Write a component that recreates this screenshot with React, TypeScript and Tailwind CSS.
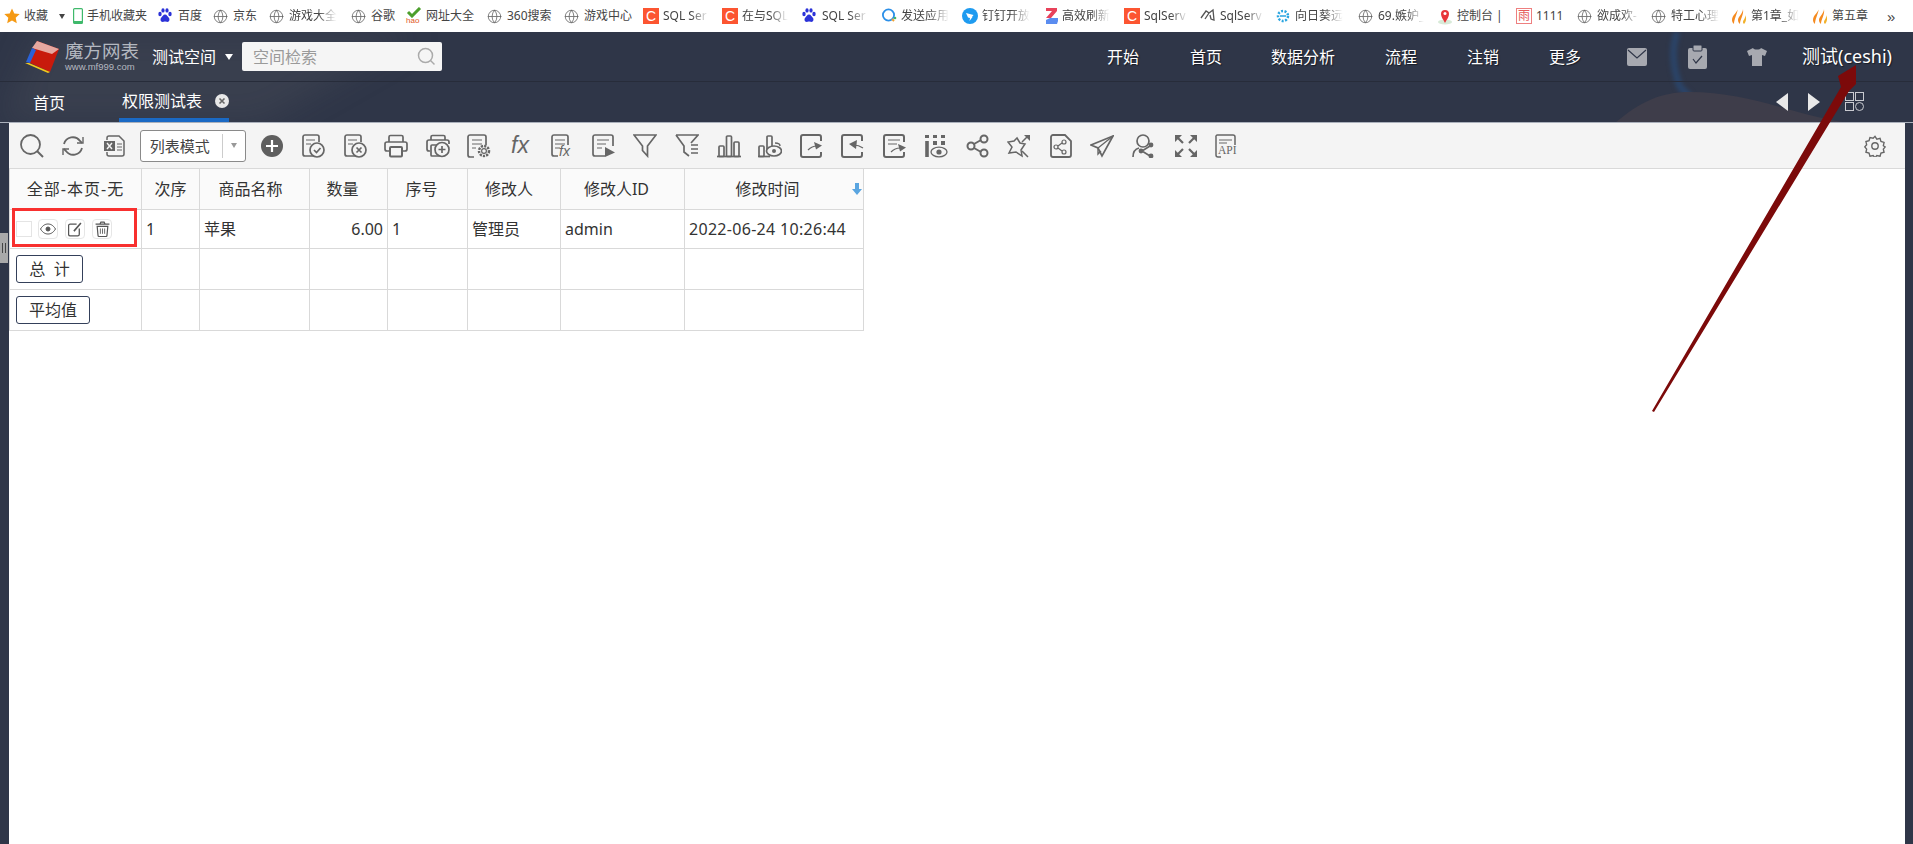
import type { ReactNode } from "react";
import { Globe } from "lucide-react";

const font = "font-['Noto_Sans','Noto_Sans_CJK_SC',sans-serif]";

/* ---------- bookmark icons ---------- */

const Star = () => (
  <svg width="16" height="16" viewBox="0 0 16 16" aria-hidden>
    <path d="M8 0.5l2.3 5 5.4.6-4 3.7 1.1 5.4L8 12.5l-4.8 2.7 1.1-5.4-4-3.7 5.4-.6z" fill="#f59a14" />
  </svg>
);

const Phone = () => (
  <svg width="10" height="16" viewBox="0 0 10 16" fill="none" aria-hidden>
    <rect x="0.6" y="0.6" width="8.8" height="14.8" rx="1" stroke="#3fb96b" strokeWidth="1.2" />
    <rect x="0.6" y="13" width="8.8" height="2.4" fill="#3fb96b" />
  </svg>
);

const Paw = () => (
  <svg width="14" height="16" viewBox="0 0 14 16" fill="#2b32d8" aria-hidden>
    <ellipse cx="2" cy="6" rx="1.7" ry="2.2" />
    <ellipse cx="5" cy="2.4" rx="1.6" ry="2.2" />
    <ellipse cx="9" cy="2.4" rx="1.6" ry="2.2" />
    <ellipse cx="12" cy="6" rx="1.7" ry="2.2" />
    <path d="M7 6.5c2 0 2.4 2 3.6 3 1.5 1.4 1 4.5-1.4 4.5-1 0-1.4-.4-2.2-.4s-1.200.4-2.200.4c-2.400 0-2.900-3.100-1.400-4.500 1.200-1 1.600-3 3.600-3z" />
  </svg>
);

const Hao = () => (
  <div className="relative h-[18px] w-4">
    <svg width="16" height="11" viewBox="0 0 16 11" fill="none" aria-hidden>
      <path d="M2 5l4 4 8-8" stroke="#4c9f2c" strokeWidth="3" />
    </svg>
    <span className="absolute bottom-0 left-0 font-['Liberation_Sans',sans-serif] text-[8px] leading-[8px] text-[#e2571e]">
      hao
    </span>
  </div>
);

const CsdnC = () => (
  <div className="grid h-4 w-4 place-items-center bg-[#fc5531] font-['Liberation_Sans',sans-serif] text-[14px] leading-none text-white">
    C
  </div>
);

const BlueQ = () => (
  <svg width="16" height="16" viewBox="0 0 16 16" fill="none" aria-hidden>
    <circle cx="7.500" cy="7" r="5.600" stroke="#2b8fe8" strokeWidth="1.800" />
    <path d="M11 11l2 2" stroke="#f0a030" strokeWidth="2" />
    <circle cx="14" cy="10" r="1.300" fill="#44b56a" />
  </svg>
);

const Ding = () => (
  <svg width="16" height="16" viewBox="0 0 16 16" aria-hidden>
    <circle cx="8" cy="8" r="8" fill="#1e9bf0" />
    <path d="M4 5l7.500 2-1.500 2 .5 0-3 4 .5-3-2-.5z" fill="#fff" />
  </svg>
);

const Zed = () => (
  <svg width="13" height="16" viewBox="0 0 13 16" aria-hidden>
    <path d="M1 0h11v3L6 10H1l6-7H1z" fill="#e8425a" />
    <path d="M1 12l4-2h8v3l-1 3H1z" fill="#5a8cf0" />
  </svg>
);

const Eagle = () => (
  <svg width="16" height="16" viewBox="0 0 16 16" fill="none" stroke="#555" strokeWidth="1.300" aria-hidden>
    <path d="M1 10l5-7 3 2-4 6M9 5l4-3 1 10-3-1-1-4" />
  </svg>
);

const Sunflower = () => (
  <svg width="16" height="16" viewBox="0 0 16 16" fill="none" aria-hidden>
    <circle cx="8" cy="8" r="5" stroke="#2aa5e0" strokeWidth="2.500" strokeDasharray="2 1.500" />
    <path d="M5 8h6" stroke="#2aa5e0" strokeWidth="1.500" />
  </svg>
);

const Pin = () => (
  <svg width="16" height="18" viewBox="0 0 16 18" aria-hidden>
    <ellipse cx="8" cy="15" rx="7" ry="2.500" fill="#d8ead8" />
    <path d="M8 16c-2-4-4-6-4-9a4 4 0 018 0c0 3-2 5-4 9z" fill="#e8353a" />
    <circle cx="8" cy="6.500" r="1.500" fill="#fff" />
  </svg>
);

const Rain = () => (
  <div className="grid h-4 w-4 place-items-center border border-[#ee7f7f] text-[12px] leading-none text-[#e65c5c]">雨</div>
);

const Flame = () => (
  <svg width="17" height="16" viewBox="0 0 17 16" aria-hidden>
    <path d="M7 0C7 4 1 7 1 12c0 2 1 3 2 4 0-5 3-9 4-16z" fill="#f58a1f" />
    <path d="M12 1c0 4-5 8-5 11 0 2 1 3 2 4 0-5 4-9 3-15z" fill="#f58a1f" />
    <path d="M14 7c1 3-2 5-2 7 0 1 .5 1.500 1 2 2-2 3-6 1-9z" fill="#f2b12a" />
  </svg>
);

const Earth = () => <Globe size={15} strokeWidth={1.300} className="text-[#666]" />;

const bookmarks: { icon: ReactNode; label: string; w: number; tw: number; iw?: number; fade?: boolean }[] = [
  { icon: <Phone />, label: "手机收藏夹", w: 85, tw: 62, iw: 14 },
  { icon: <Paw />, label: "百度", w: 55, tw: 26 },
  { icon: <Earth />, label: "京东", w: 56, tw: 26 },
  { icon: <Earth />, label: "游戏大全", w: 82, tw: 48, fade: true },
  { icon: <Earth />, label: "谷歌", w: 55, tw: 26 },
  { icon: <Hao />, label: "网址大全", w: 81, tw: 50 },
  { icon: <Earth />, label: "360搜索", w: 77, tw: 48 },
  { icon: <Earth />, label: "游戏中心", w: 79, tw: 50 },
  { icon: <CsdnC />, label: "SQL Ser", w: 79, tw: 46, fade: true },
  { icon: <CsdnC />, label: "在与SQL", w: 80, tw: 46, fade: true },
  { icon: <Paw />, label: "SQL Ser", w: 79, tw: 46, fade: true },
  { icon: <BlueQ />, label: "发送应用", w: 81, tw: 48, fade: true },
  { icon: <Ding />, label: "钉钉开放", w: 83, tw: 48, fade: true },
  { icon: <Zed />, label: "高效刷新", w: 79, tw: 48, iw: 17, fade: true },
  { icon: <CsdnC />, label: "SqlServ", w: 76, tw: 44, fade: true },
  { icon: <Eagle />, label: "SqlServ", w: 75, tw: 44, fade: true },
  { icon: <Sunflower />, label: "向日葵远", w: 83, tw: 48, fade: true },
  { icon: <Earth />, label: "69.嫉妒_", w: 79, tw: 46, fade: true },
  { icon: <Pin />, label: "控制台 |", w: 79, tw: 46 },
  { icon: <Rain />, label: "1111", w: 61, tw: 30 },
  { icon: <Earth />, label: "欲成欢-", w: 74, tw: 42, fade: true },
  { icon: <Earth />, label: "特工心理", w: 80, tw: 48, fade: true },
  { icon: <Flame />, label: "第1章_如", w: 81, tw: 48, fade: true },
  { icon: <Flame />, label: "第五章", w: 75, tw: 48 },
];

function BookmarkBar() {
  return (
    <div className="flex h-8 items-center bg-white pl-1 text-[12px] text-[#444]">
      <div className="flex w-[69px] items-center">
        <Star />
        <span className="ml-1">收藏</span>
        <span className="ml-[11px] h-0 w-0 border-x-[3.500px] border-t-[5px] border-x-transparent border-t-[#444]" />
      </div>
      {bookmarks.map((b, i) => (
        <div key={i} className="flex shrink-0 items-center" style={{ width: b.w }}>
          <div className="flex shrink-0 items-center" style={{ width: b.iw ?? 20 }}>
            {b.icon}
          </div>
          <span
            className={`overflow-hidden whitespace-nowrap ${b.fade ? "[mask-image:linear-gradient(to_right,black_60%,transparent)]" : ""}`}
            style={{ width: b.tw }}
          >
            {b.label}
          </span>
        </div>
      ))}
      <span className="font-['Liberation_Sans',sans-serif] text-[15px] leading-none">»</span>
    </div>
  );
}

/* ---------- header ---------- */

function Logo() {
  return (
    <svg width="36" height="32" viewBox="0 0 36 32" aria-hidden>
      <path d="M13 0L35 8 26 31 4 21z" fill="#c81a0c" />
      <path d="M13 0L35 8 28 13 8 7z" fill="#e6a8a0" />
      <path d="M8 7L2 21l4 1 6-13z" fill="#2a62d8" />
      <path d="M1 22l23 10 2-1L5 22z" fill="#f2c91c" />
    </svg>
  );
}

const navItems = [
  { label: "开始", ml: "ml-0" },
  { label: "首页", ml: "ml-[51px]" },
  { label: "数据分析", ml: "ml-[49px]" },
  { label: "流程", ml: "ml-[50px]" },
  { label: "注销", ml: "ml-[50px]" },
  { label: "更多", ml: "ml-[50px]" },
];

function Header() {
  return (
    <div className="relative h-[91px] overflow-hidden bg-[#2f3648]">
      {/* backdrop photo, roughly */}
      <svg className="absolute inset-0" width="1913" height="91" viewBox="0 0 1913 91" aria-hidden>
        <path className="blur-lg" d="M40 0H420L260 91H0z" fill="#6d6f70" fillOpacity="0.16" />
        <path className="blur-[2px]" d="M1677 0C1672 15 1672 35 1680 55L1690 65" fill="none" stroke="#2b4468" strokeWidth="7" />
        <path d="M1615 91C1640 70 1660 60 1690 60 1750 60 1800 85 1850 91z" fill="#3e3d4a" />
      </svg>

      <div className="relative flex h-[50px] items-center border-b border-[#272c3a]">
        <div className="ml-6 w-[41px] shrink-0">
          <Logo />
        </div>
        <div className="w-[87px] shrink-0 text-[#b4b8c0]">
          <div className="text-[18.500px] leading-[20px]">魔方网表</div>
          <div className="font-['Liberation_Sans',sans-serif] text-[9.500px] leading-[11px]">www.mf999.com</div>
        </div>
        <span className="text-[16px] text-white">测试空间</span>
        <span className="ml-[9px] h-0 w-0 border-x-[4px] border-t-[6px] border-x-transparent border-t-white" />
        <div className="ml-[9px] flex h-[29px] w-[200px] items-center justify-between rounded-[2px] bg-[#f5f5f5] pr-[6px] pl-[11px]">
          <span className="text-[16px] text-[#9a9a9a]">空间检索</span>
          <svg width="19" height="19" viewBox="0 0 19 19" fill="none" stroke="#aaa" strokeWidth="1.500" aria-hidden>
            <circle cx="8.500" cy="8.500" r="7" />
            <path d="M13.500 13.500l4 4" />
          </svg>
        </div>

        <div className="ml-auto flex items-center pr-[21px] text-[16px] text-white [text-shadow:1px_1px_1px_rgba(0,0,0,0.5)]">
          {navItems.map((n) => (
            <span key={n.label} className={n.ml}>
              {n.label}
            </span>
          ))}
          <svg className="ml-[46px]" width="20" height="20" viewBox="0 0 20 20" aria-hidden>
            <rect y="1" width="20" height="18" rx="2" fill="#a7a9b0" />
            <path d="M1 3l9 8 9-8" fill="none" stroke="#2f3648" strokeWidth="1.200" />
          </svg>
          <svg className="ml-[41px]" width="19" height="24" viewBox="0 0 19 24" aria-hidden>
            <rect y="3" width="19" height="21" rx="2" fill="#a7a9b0" />
            <rect x="5" y="0" width="9" height="6" rx="1" fill="#a7a9b0" stroke="#2f3648" />
            <path d="M5 14l3 4 6-7" fill="none" stroke="#2f3648" strokeWidth="1.200" />
          </svg>
          <svg className="ml-[40px]" width="20" height="20" viewBox="0 0 20 20" aria-hidden>
            <path d="M6 1c1 2 7 2 8 0l6 3-2 5-3-1v11H5V8L2 9 0 4z" fill="#a7a9b0" />
          </svg>
          <span className="ml-[35px] text-[18px]">测试(ceshi)</span>
        </div>
      </div>

      <div className="relative flex h-[41px] items-center">
        <span className="ml-[33px] text-[16px] text-white">首页</span>
        <div className="relative ml-[54px] flex h-[39px] w-[110px] items-center border-b-4 border-[#1a69c4] pl-[3px]">
          <span className="text-[16px] text-white">权限测试表</span>
          <svg className="ml-[13px]" width="14" height="14" viewBox="0 0 14 14" aria-hidden>
            <circle cx="7" cy="7" r="7" fill="#e8e8e8" />
            <path d="M4.500 4.500l5 5M9.500 4.500l-5 5" stroke="#666" strokeWidth="1.600" />
          </svg>
        </div>
        <div className="ml-auto flex -translate-y-px items-center pr-[49px]">
          <span className="h-0 w-0 border-y-[9px] border-r-[12px] border-y-transparent border-r-[#e8e8e8]" />
          <span className="ml-[20px] h-0 w-0 border-y-[9px] border-l-[12px] border-y-transparent border-l-[#e8e8e8]" />
          <svg className="ml-[25px]" width="19" height="19" viewBox="0 0 19 19" fill="none" stroke="#c8cad0" strokeWidth="1" aria-hidden>
            <rect x="0.500" y="0.500" width="8" height="8" />
            <rect x="10.500" y="0.500" width="8" height="8" />
            <rect x="0.500" y="10.500" width="8" height="8" />
            <circle cx="14.500" cy="14.500" r="4" />
          </svg>
        </div>
      </div>
      <div className="absolute right-0 bottom-0 left-0 h-px bg-[#aab0bb]" />
    </div>
  );
}

/* ---------- toolbar ---------- */

const G = ({ children }: { children: ReactNode }) => (
  <svg width="24" height="24" viewBox="0 0 24 24" fill="none" stroke="#666" strokeWidth="1.700" aria-hidden>
    {children}
  </svg>
);

const docBody = "M16 22H4a2 2 0 01-2-2V3a2 2 0 012-2h12a2 2 0 012 2v5";

const tools: ReactNode[] = [
  // add
  <svg key="add" width="24" height="24" viewBox="0 0 24 24" aria-hidden>
    <circle cx="12" cy="12" r="11" fill="#5f5f5f" />
    <path d="M12 6v12M6 12h12" stroke="#fff" strokeWidth="2.200" />
  </svg>,
  // doc check
  <G key="c">
    <path d={docBody} />
    <path d="M5 6h9M5 10h5" strokeWidth="1.200" />
    <circle cx="16" cy="16" r="7" fill="#f4f4f4" />
    <path d="M13 16l2.500 2.500 4-4.500" />
  </G>,
  // doc cross
  <G key="x">
    <path d={docBody} />
    <path d="M5 6h9M5 10h5" strokeWidth="1.200" />
    <circle cx="16" cy="16" r="7" fill="#f4f4f4" />
    <path d="M13.500 13.500l5 5M18.500 13.500l-5 5" />
  </G>,
  // print
  <G key="p">
    <path d="M5 8V3a1.500 1.500 0 011.500-1.500h11A1.500 1.500 0 0119 3v5" />
    <path d="M5 17H3a2 2 0 01-2-2v-5a2 2 0 012-2h18a2 2 0 012 2v5a2 2 0 01-2 2h-2" />
    <rect x="6" y="13" width="12" height="9.500" rx="1" strokeWidth="2" />
  </G>,
  // print add
  <G key="pa">
    <path d="M5 6V3a1.500 1.500 0 011.500-1.500h11A1.500 1.500 0 0119 3v3" />
    <path d="M4 17H3a2 2 0 01-2-2V8a2 2 0 012-2h18a2 2 0 012 2v2" />
    <rect x="5" y="11" width="8" height="11" rx="1" />
    <circle cx="16" cy="15.500" r="7" fill="#f4f4f4" />
    <path d="M16 12v7M12.500 15.500h7" />
  </G>,
  // doc gear
  <G key="g">
    <path d="M7 23H3a2 2 0 01-2-2V3a2 2 0 012-2h14a2 2 0 012 2v8" />
    <path d="M5 6h10M5 10h10M5 14h4" strokeWidth="1.200" />
    <circle cx="17" cy="17" r="5" strokeWidth="2.500" strokeDasharray="2.200 1.100" />
    <circle cx="17" cy="17" r="2.400" strokeWidth="1.200" />
  </G>,
  // fx
  <svg key="fx" className="overflow-visible" width="24" height="24" viewBox="0 0 24 24" aria-hidden>
    <text x="2" y="19" fill="#666" fontSize="23" fontStyle="italic" fontFamily="Liberation Sans, sans-serif">
      fx
    </text>
  </svg>,
  // doc fx
  <svg key="dfx" className="overflow-visible" width="24" height="24" viewBox="0 0 24 24" fill="none" stroke="#666" strokeWidth="1.700" aria-hidden>
    <path d="M8 22H4a2 2 0 01-2-2V3a2 2 0 012-2h12a2 2 0 012 2v8" />
    <path d="M5 6h10M5 10h10M5 14h5" strokeWidth="1.200" />
    <text x="9" y="22" fill="#666" stroke="none" fontSize="14" fontStyle="italic" fontFamily="Liberation Sans, sans-serif">
      fx
    </text>
  </svg>,
  // doc play
  <G key="dp">
    <path d="M13 22H3a2 2 0 01-2-2V3a2 2 0 012-2h16a2 2 0 012 2v9" />
    <path d="M5 6h12M5 10h9M5 14h5" strokeWidth="1.200" />
    <path d="M13 13l10 5.500-10 4.500z" fill="#666" stroke="none" />
  </G>,
  // filter
  <G key="f">
    <path d="M1 1h22l-8.500 11v10l-5-5.500V12z" />
  </G>,
  // filter list
  <G key="fl">
    <path d="M1 1h22l-7 8M1 1l8 11v6l5 4" />
    <path d="M16 11h7M16 15h7M16 19h7" strokeWidth="1.400" />
  </G>,
  // bars
  <G key="b">
    <path d="M0 22.500h24" />
    <rect x="2" y="12" width="5" height="10.500" rx="1" />
    <rect x="9.500" y="2" width="5" height="20.500" rx="1" />
    <rect x="17" y="8" width="5" height="14.500" rx="1" />
  </G>,
  // bars eye
  <G key="be">
    <path d="M0 22.500h12" />
    <rect x="1" y="12" width="5" height="10.500" rx="1" />
    <rect x="9" y="2" width="5" height="14" rx="1" />
    <ellipse cx="16" cy="17" rx="7.500" ry="5" fill="#f4f4f4" />
    <circle cx="16" cy="17" r="2" fill="#666" stroke="none" />
    <path d="M17 9c3 0 5 1 5 3" strokeWidth="1.400" />
  </G>,
  // export
  <G key="ex">
    <path d="M21 7V3a2 2 0 00-2-2H3a2 2 0 00-2 2v18a2 2 0 002 2h16a2 2 0 002-2v-3" strokeWidth="2" />
    <path d="M8 16c3-3 6-4 9-4" strokeWidth="1.200" />
    <path d="M14 8l8 3.500-6 4z" fill="#666" stroke="none" />
  </G>,
  // import
  <G key="im">
    <path d="M1 7V3a2 2 0 012-2h16a2 2 0 012 2v4M21 18v3a2 2 0 01-2 2H3a2 2 0 01-2-2V7" strokeWidth="2" />
    <path d="M22 14c-3-2-6-3-9-3" strokeWidth="1.200" />
    <path d="M8 10l8-4-1 9z" fill="#666" stroke="none" />
  </G>,
  // doc arrow
  <G key="da">
    <path d="M21 8V3a2 2 0 00-2-2H3a2 2 0 00-2 2v18a2 2 0 002 2h16a2 2 0 002-2v-3" strokeWidth="2" />
    <path d="M5 6h12M5 10h9" strokeWidth="1.200" />
    <path d="M8 18c3-3 6-4 9-4" strokeWidth="1.200" />
    <path d="M15 10l8 3.500-6 4z" fill="#666" stroke="none" />
  </G>,
  // columns eye
  <G key="ce">
    <path d="M3 7v16" strokeWidth="3.600" />
    <path d="M1 1h4v3H1zM9 1h4v3H9zM17 1h4v3h-4zM9 7h4v4H9zM17 7h4v4h-4z" fill="#666" stroke="none" />
    <ellipse cx="15" cy="18" rx="8" ry="4.800" strokeWidth="1.300" />
    <circle cx="15" cy="18" r="2.600" fill="#666" stroke="none" />
  </G>,
  // share
  <G key="s">
    <circle cx="18" cy="5" r="3.500" strokeWidth="2" />
    <circle cx="5" cy="12" r="3.500" strokeWidth="2" />
    <circle cx="18" cy="19" r="3.500" strokeWidth="2" />
    <path d="M8 10l7-4M8 14l7 4" strokeWidth="2" />
  </G>,
  // pin arrow
  <G key="pin">
    <path d="M10 4l3 5 5 1-4 6 1 6-6-4-7 1 3-6-4-5 6-1z" strokeWidth="1.500" />
    <path d="M15 17l6 6M15 8l5-5" strokeWidth="1.500" />
    <path d="M17 1h6v6z" fill="#666" stroke="none" />
  </G>,
  // doc share
  <G key="ds">
    <path d="M16 1H4a2 2 0 00-2 2v18a2 2 0 002 2h16a2 2 0 002-2V7z" strokeWidth="1.800" />
    <circle cx="15" cy="8" r="2" strokeWidth="1.200" />
    <circle cx="7" cy="13" r="2" strokeWidth="1.200" />
    <circle cx="15" cy="18" r="2" strokeWidth="1.200" />
    <path d="M9 12l4-3M9 14l4 3" strokeWidth="1.200" />
  </G>,
  // send
  <G key="send">
    <path d="M23 2L1 11l7 3 4 8z" />
    <path d="M23 2L8 14v6l3-3" strokeWidth="1.400" />
  </G>,
  // user share
  <G key="us">
    <circle cx="11" cy="7" r="6" />
    <path d="M1 23c0-5 2-8 6-9" />
    <path d="M10 17l8-5M10 17l8 5" strokeWidth="1.600" />
    <circle cx="19" cy="11" r="2.400" fill="#666" stroke="none" />
    <circle cx="9" cy="17" r="2.400" fill="#666" stroke="none" />
    <circle cx="19" cy="22" r="2.400" fill="#666" stroke="none" />
  </G>,
  // expand
  <G key="e">
    <path d="M3 3l6 6M21 3l-6 6M3 21l6-6M21 21l-6-6" strokeWidth="2.200" />
    <path d="M1 1h7L1 8zM23 1h-7l7 7zM1 23h7l-7-7zM23 23h-7l7-7z" fill="#666" stroke="none" />
  </G>,
  // API doc
  <svg key="api" className="overflow-visible" width="24" height="24" viewBox="0 0 24 24" fill="none" stroke="#666" strokeWidth="1.500" aria-hidden>
    <path d="M20 11V3a2 2 0 00-2-2H2.500A1.500 1.500 0 001 3v18a2 2 0 002 2h3" />
    <path d="M4 6h13M4 9h8" strokeWidth="1" />
    <text x="3" y="20" fill="#666" stroke="none" fontSize="11.500" fontFamily="Liberation Serif, serif">
      API
    </text>
  </svg>,
];

function Toolbar() {
  return (
    <div className="flex h-[46px] shrink-0 items-center border-b border-[#d9d9d9] bg-[#f4f4f4] pl-[2px]">
      <div className="grid w-[41.600px] place-items-center">
        <svg width="24" height="24" viewBox="0 0 24 24" fill="none" stroke="#666" strokeWidth="1.800" aria-hidden>
          <circle cx="10.500" cy="10.500" r="9.500" />
          <path d="M17 17l6 6" strokeWidth="2" />
        </svg>
      </div>
      <div className="grid w-[41.600px] place-items-center">
        <svg width="22" height="22" viewBox="0 0 22 22" fill="none" stroke="#666" strokeWidth="1.800" aria-hidden>
          <path d="M2 9a9 9 0 0116-3l2 2" />
          <path d="M20 13a9 9 0 01-16 3l-2-2" />
          <path d="M21 2v6h-6M1 20v-6h6" strokeWidth="1.400" />
        </svg>
      </div>
      <div className="grid w-[41.600px] place-items-center">
        <svg width="21" height="22" viewBox="0 0 21 22" fill="none" stroke="#666" strokeWidth="1.500" aria-hidden>
          <path d="M3 5V3a2 2 0 012-2h10l5 5v13a2 2 0 01-2 2H5a2 2 0 01-2-2v-2" />
          <rect x="0" y="6" width="11" height="10" fill="#666" stroke="none" />
          <path d="M3 8l5 6M8 8l-5 6" stroke="#f4f4f4" strokeWidth="1.400" />
          <path d="M13 9h5M13 12h5M13 15h5" strokeWidth="1.200" />
        </svg>
      </div>
      <div className="ml-[4px] flex h-8 w-[106px] shrink-0 items-center rounded-[3px] border border-[#8a8a8a] bg-white pl-[9px] text-[15px] text-[#444]">
        <span className="w-[73px] shrink-0 border-r border-[#ccc] leading-[24px]">列表模式</span>
        <span className="ml-[8px] h-0 w-0 border-x-[3.500px] border-t-[5px] border-x-transparent border-t-[#999]" />
      </div>
      <div className="ml-[5px] flex">
        {tools.map((t, i) => (
          <div key={i} className="grid w-[41.550px] place-items-center">
            {t}
          </div>
        ))}
      </div>
      <div className="mr-[19px] ml-auto">
        <svg width="22" height="22" viewBox="0 0 24 24" fill="none" stroke="#666" strokeWidth="1.500" aria-hidden>
          <circle cx="12" cy="12" r="3.500" />
          <path d="M12 1.500l2 3 3.500-.8 1 3.400 3.400 1-.8 3.500 2 1.400-2 2.400.8 3.400-3.400 1-1 3.400-3.500-.8-2 2.500-2-2.500-3.500.8-1-3.400-3.400-1 .8-3.400-2-2.400 2-2.400-.8-3.500 3.400-1 1-3.400 3.500.8z" />
        </svg>
      </div>
    </div>
  );
}

/* ---------- table ---------- */

const cols = [132, 58, 110, 78, 80, 93, 124, 179];
const th = "border-r border-b border-[#d9d9d9] bg-[#fafafa] text-center font-normal";
const td = "border-r border-b border-[#d9d9d9] px-[4px] align-middle";

const ActionBox = ({ children }: { children: ReactNode }) => (
  <div className="grid h-5 w-5 place-items-center rounded-[4px] border border-[#e6e6e6]">{children}</div>
);

function DataTable() {
  return (
    <table className="w-[855px] table-fixed self-start border-separate border-spacing-0 border-l border-[#d9d9d9] text-[16px] text-[#333]">
      <colgroup>
        {cols.map((w, i) => (
          <col key={i} style={{ width: w }} />
        ))}
      </colgroup>
      <tbody>
        <tr className="h-[41px]">
          <th className={`${th} tracking-[1px]`}>全部-本页-无</th>
          <th className={th}>次序</th>
          <th className={`${th} pr-[8px]`}>商品名称</th>
          <th className={`${th} pr-[12px]`}>数量</th>
          <th className={`${th} pr-[12px]`}>序号</th>
          <th className={`${th} pr-[10px]`}>修改人</th>
          <th className={`${th} pr-[12px]`}>修改人ID</th>
          <th className={`${th} relative pr-[13px]`}>
            修改时间
            <svg className="absolute top-[14px] right-[1px]" width="10" height="12" viewBox="0 0 10 12" aria-hidden>
              <path d="M3 0h4v6h3l-5 6-5-6h3z" fill="#5aa5e0" />
            </svg>
          </th>
        </tr>
        <tr className="h-[39px]">
          <td className={`${td} pl-[6px]`}>
            <div className="flex items-center">
              <div className="h-4 w-[16px] border border-[#e4e4e4] bg-white" />
              <div className="ml-[6px] flex gap-[7px]">
                <ActionBox>
                  <svg width="16" height="12" viewBox="0 0 16 12" fill="none" stroke="#555" strokeWidth="1" aria-hidden>
                    <path d="M0.500 6C3 2 5.500 1 8 1s5 1 7.500 5c-2.500 4-5 5-7.500 5s-5-1-7.500-5z" />
                    <circle cx="8" cy="6" r="2" fill="#555" />
                  </svg>
                </ActionBox>
                <ActionBox>
                  <svg width="14" height="15" viewBox="0 0 13 14" fill="none" stroke="#555" strokeWidth="1.200" aria-hidden>
                    <path d="M8 2H2a1.500 1.500 0 00-1.500 1.500v8A1.500 1.500 0 002 13h7a1.500 1.500 0 001.500-1.500V6" />
                    <path d="M5.500 8.500L12 1" strokeWidth="1.500" />
                  </svg>
                </ActionBox>
                <ActionBox>
                  <svg width="15" height="16" viewBox="0 0 14 15" fill="none" stroke="#555" strokeWidth="1.100" aria-hidden>
                    <path d="M0.500 3h13M4.500 3l1-2h3l1 2M2 5h10l-.8 8.500a1 1 0 01-1 1H3.800a1 1 0 01-1-1z" />
                    <path d="M5 7v5M7 7v5M9 7v5" strokeWidth="0.800" />
                  </svg>
                </ActionBox>
              </div>
            </div>
          </td>
          <td className={td}>1</td>
          <td className={td}>苹果</td>
          <td className={`${td} text-right`}>6.00</td>
          <td className={td}>1</td>
          <td className={td}>管理员</td>
          <td className={td}>admin</td>
          <td className={`${td} tracking-[0.300px] whitespace-nowrap`}>2022-06-24 10:26:44</td>
        </tr>
        {["总  计", "平均值"].map((label) => (
          <tr key={label} className="h-[41px]">
            <td className={`${td} pl-[6px]`}>
              <div
                className={`flex h-[28px] items-center justify-center rounded-[3px] border border-[#34405a] whitespace-pre ${
                  label === "平均值" ? "w-[74px]" : "w-[67px]"
                }`}
              >
                {label}
              </div>
            </td>
            {cols.slice(1).map((w) => (
              <td key={w} className={td} />
            ))}
          </tr>
        ))}
      </tbody>
    </table>
  );
}

/* ---------- page ---------- */

export default function App() {
  return (
    <div className={`relative h-[844px] w-[1913px] overflow-hidden bg-white ${font}`}>
      <BookmarkBar />
      <Header />
      <div className="flex h-[721px]">
        <div className="flex w-[9px] shrink-0 flex-col bg-[#2f3648]">
          <div className="mt-[110px] flex h-[30px] w-2 items-center justify-center gap-[2px] bg-[#a9a9a9]">
            <span className="h-[10px] w-px bg-[#444]" />
            <span className="h-[10px] w-px bg-[#444]" />
          </div>
        </div>
        <div className="flex min-w-0 flex-1 flex-col">
          <Toolbar />
          <DataTable />
        </div>
        <div className="w-[8px] shrink-0 bg-[#2f3648]" />
      </div>

      {/* annotations drawn over the shot */}
      <div className="pointer-events-none absolute top-[208px] left-[12px] h-[39px] w-[125px] border-[3px] border-[#f8302f]" />
      <svg className="pointer-events-none absolute inset-0" width="1913" height="844" viewBox="0 0 1913 844" aria-hidden>
        <polygon points="1652,411 1841,87 1838,76 1856,65 1856,84 1849,91 1654,412" fill="#7c0a0a" />
      </svg>
    </div>
  );
}
